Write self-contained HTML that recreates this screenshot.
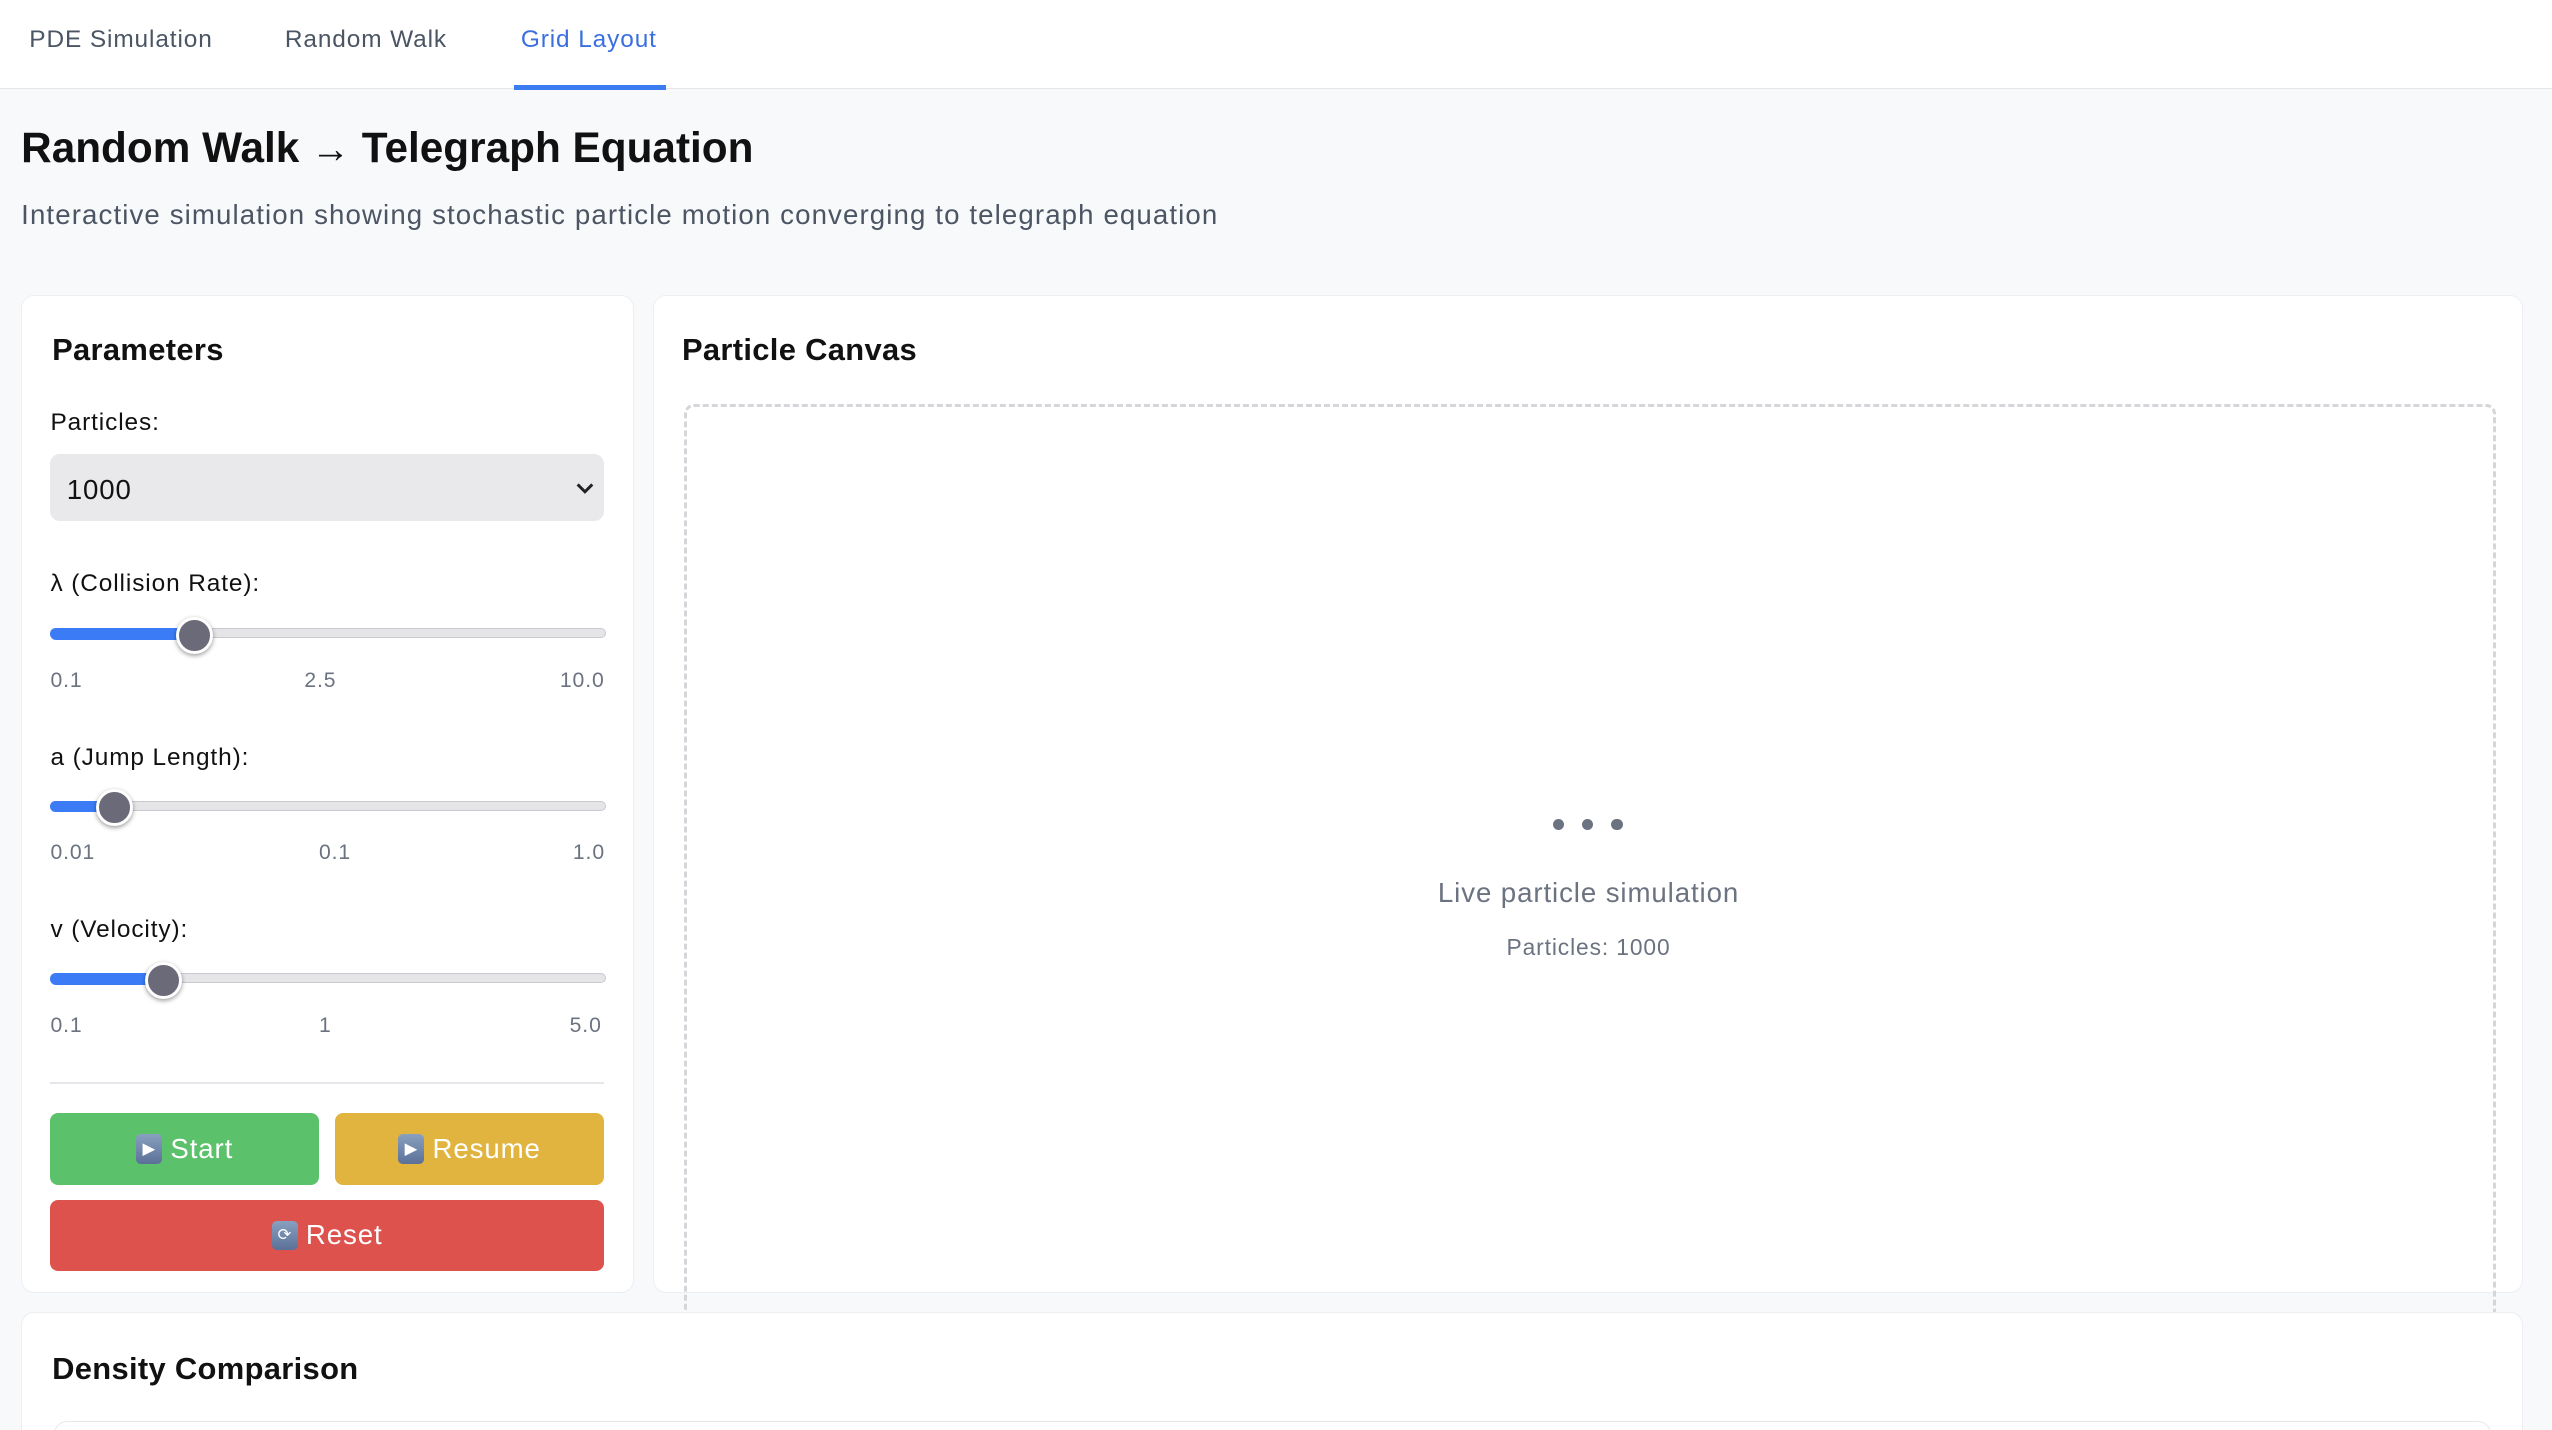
<!DOCTYPE html>
<html><head><meta charset="utf-8"><style>
html,body{margin:0;padding:0;width:2552px;height:1430px;overflow:hidden;background:#f8f9fb;font-family:"Liberation Sans",sans-serif}
#w{zoom:1.6276;width:1568px;height:879px;position:relative;letter-spacing:.55px}
.a{position:absolute}
.nav{left:0;top:0;width:1568px;height:54px;background:#fff;border-bottom:1px solid #e5e7eb}
.tab{top:16px;font-size:15px;color:#4b5563}
.card{background:#fff;border:1px solid #eceef1;border-radius:8px}
h2{margin:0;font-size:19px;font-weight:700;color:#111;position:absolute;letter-spacing:.2px}
.lbl{font-size:15px;font-weight:500;color:#111;left:31px}
.track{left:31px;width:340px;height:5px;background:#e5e5e8;border:1px solid #c9c9cf;border-radius:4px}
.fill{height:7px;background:#3b7cf6;border-radius:4px;left:31px}
.th{width:19px;height:19px;border-radius:50%;background:#6a6a78;border:2px solid #fff;box-shadow:0 1px 3px rgba(0,0,0,.4)}
.tk{font-size:13px;color:#6b7280}
.btn{color:#fff;font-size:17px;border-radius:5px;display:flex;align-items:center;justify-content:center;gap:5px}
.ic{width:16px;height:18px;background:linear-gradient(#8aa0c0,#5a7098);border-radius:3px;display:inline-flex;align-items:center;justify-content:center;font-size:10px;color:#fff}
</style></head><body><div id="w">
<div class="a nav"></div>
<div class="a tab" style="left:18px">PDE Simulation</div>
<div class="a tab" style="left:175px">Random Walk</div>
<div class="a tab" style="left:320px;color:#3b6fe0">Grid Layout</div>
<div class="a" style="left:316px;top:52px;width:93px;height:3px;background:#3b7cf0"></div>
<div class="a" style="left:13px;top:76px;font-size:26px;font-weight:700;color:#111;letter-spacing:0">Random Walk <span style="font-size:24px">→</span> Telegraph Equation</div>
<div class="a" style="left:13px;top:122px;font-size:17px;color:#4b5563;letter-spacing:.68px">Interactive simulation showing stochastic particle motion converging to telegraph equation</div>

<div class="a card" style="left:13px;top:181px;width:375px;height:612px"></div>
<h2 style="left:32px;top:204px">Parameters</h2>
<div class="a lbl" style="top:251px">Particles:</div>
<div class="a" style="left:31px;top:279px;width:340px;height:41px;background:#e9e9ec;border-radius:6px"></div>
<div class="a" style="left:41px;top:291px;font-size:17px;color:#111">1000</div>
<svg class="a" style="left:354px;top:296px" width="11" height="8"><path d="M1 1.5L5.5 6 10 1.5" stroke="#222" stroke-width="1.8" fill="none"/></svg>

<div class="a lbl" style="top:350px">λ (Collision Rate):</div>
<div class="a track" style="top:386px"></div><div class="a fill" style="top:386px;width:88px"></div>
<div class="a th" style="left:108px;top:379px"></div>
<div class="a tk" style="left:31px;top:411px">0.1</div><div class="a tk" style="left:187px;top:411px">2.5</div><div class="a tk" style="left:344px;top:411px">10.0</div>

<div class="a lbl" style="top:457px">a (Jump Length):</div>
<div class="a track" style="top:492px"></div><div class="a fill" style="top:492px;width:39px"></div>
<div class="a th" style="left:59px;top:485px"></div>
<div class="a tk" style="left:31px;top:517px">0.01</div><div class="a tk" style="left:196px;top:517px">0.1</div><div class="a tk" style="left:352px;top:517px">1.0</div>

<div class="a lbl" style="top:563px">v (Velocity):</div>
<div class="a track" style="top:598px"></div><div class="a fill" style="top:598px;width:69px"></div>
<div class="a th" style="left:89px;top:591px"></div>
<div class="a tk" style="left:31px;top:623px">0.1</div><div class="a tk" style="left:196px;top:623px">1</div><div class="a tk" style="left:350px;top:623px">5.0</div>

<div class="a" style="left:31px;top:665px;width:340px;height:1px;background:#e5e7eb"></div>
<div class="a btn" style="left:31px;top:684px;width:165px;height:44px;background:#5cc16b"><span class="ic">▶</span>Start</div>
<div class="a btn" style="left:206px;top:684px;width:165px;height:44px;background:#e0b43e"><span class="ic">▶</span>Resume</div>
<div class="a btn" style="left:31px;top:737px;width:340px;height:44px;background:#de524d"><span class="ic">⟳</span>Reset</div>

<div class="a card" style="left:401px;top:181px;width:1148px;height:612px"></div>
<h2 style="left:419px;top:204px">Particle Canvas</h2>
<div class="a" style="left:420px;top:248px;width:1110px;height:560px;border:2px dashed #d4d6da;border-bottom:none;border-radius:6px 6px 0 0"></div>
<div class="a" style="left:954px;top:503px;width:7px;height:7px;border-radius:50%;background:#6b7280"></div>
<div class="a" style="left:972px;top:503px;width:7px;height:7px;border-radius:50%;background:#6b7280"></div>
<div class="a" style="left:990px;top:503px;width:7px;height:7px;border-radius:50%;background:#6b7280"></div>
<div class="a" style="left:0;width:1952px;top:539px;text-align:center;font-size:17px;color:#6b7280">Live particle simulation</div>
<div class="a" style="left:0;width:1952px;top:574px;text-align:center;font-size:14px;color:#6b7280">Particles: 1000</div>

<div class="a card" style="left:13px;top:806px;width:1536px;height:100px"></div>
<h2 style="left:32px;top:830px">Density Comparison</h2>
<div class="a" style="left:33px;top:873px;width:1496px;height:20px;border:1px solid #e5e7eb;border-radius:8px"></div>
</div></body></html>
